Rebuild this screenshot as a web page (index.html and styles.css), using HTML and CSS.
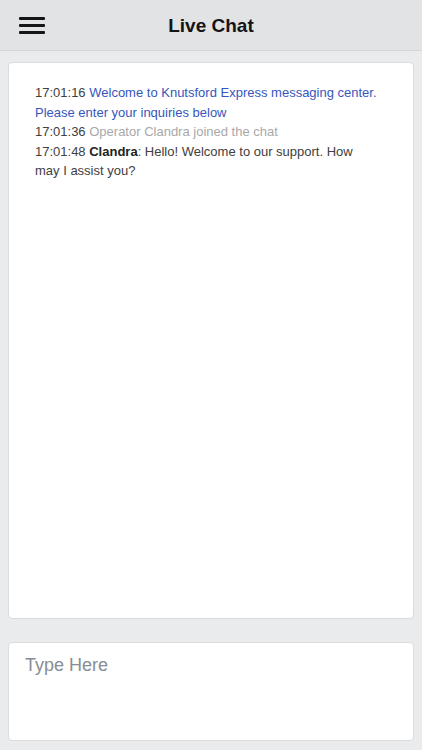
FILE: index.html
```html
<!DOCTYPE html>
<html lang="en">
<head>
    <meta charset="UTF-8">
    <meta name="viewport" content="width=device-width, initial-scale=1.0">
    <title>Live Chat</title>
    <link rel="stylesheet" href="styles.css">
</head>
<body>
    <header class="topbar">
        <button class="menu-btn" aria-label="Menu">
            <span></span>
            <span></span>
            <span></span>
        </button>
        <h1>Live Chat</h1>
        <div class="spacer"></div>
    </header>

    <main class="page">
        <section class="chat-log">
            <p class="line"><span class="time">17:01:16</span> <span class="system">Welcome to Knutsford Express messaging center. Please enter your inquiries below</span></p>
            <p class="line"><span class="time">17:01:36</span> <span class="notice">Operator Clandra joined the chat</span></p>
            <p class="line"><span class="time">17:01:48</span> <strong>Clandra</strong>: Hello! Welcome to our support. How may I assist you?</p>
        </section>

        <textarea class="composer" placeholder="Type Here"></textarea>
    </main>
</body>
</html>
```

FILE: styles.css
```css
* {
    margin: 0;
    padding: 0;
    box-sizing: border-box;
    font-family: 'Liberation Sans', Arial, sans-serif;
}

html, body {
    height: 100%;
}

body {
    background: #e9ebec;
    display: flex;
    flex-direction: column;
}

.topbar {
    height: 51px;
    flex-shrink: 0;
    background: #e2e3e5;
    border-bottom: 1px solid #d4d6d8;
    display: grid;
    grid-template-columns: 1fr auto 1fr;
    align-items: center;
}

.menu-btn {
    width: 26px;
    margin-left: 19px;
    margin-top: 1px;
    background: none;
    border: none;
    display: flex;
    flex-direction: column;
    gap: 4px;
}

.menu-btn span {
    display: block;
    height: 3px;
    border-radius: 1px;
    background: #151515;
}

.topbar h1 {
    font-size: 19px;
    font-weight: bold;
    color: #141414;
    margin-top: 1px;
}

.page {
    flex: 1;
    display: flex;
    flex-direction: column;
    gap: 23px;
    padding: 11px 8px 9px;
}

.chat-log {
    flex: 1;
    background: #fff;
    border: 1px solid #d9dbdd;
    border-radius: 4px;
    padding: 20px 34px 20px 26px;
}

.line {
    font-size: 13px;
    line-height: 19.5px;
    color: #404040;
}

.system {
    color: #3656bd;
}

.notice {
    color: #a9a9a9;
}

.line strong {
    color: #222;
}

.composer {
    height: 99px;
    flex-shrink: 0;
    width: 100%;
    resize: none;
    background: #fff;
    border: 1px solid #d9dbdd;
    border-radius: 4px;
    padding: 11px 16px;
    font-size: 18px;
    line-height: 22px;
    color: #333;
    outline: none;
}

.composer::placeholder {
    color: #878d94;
}
```
